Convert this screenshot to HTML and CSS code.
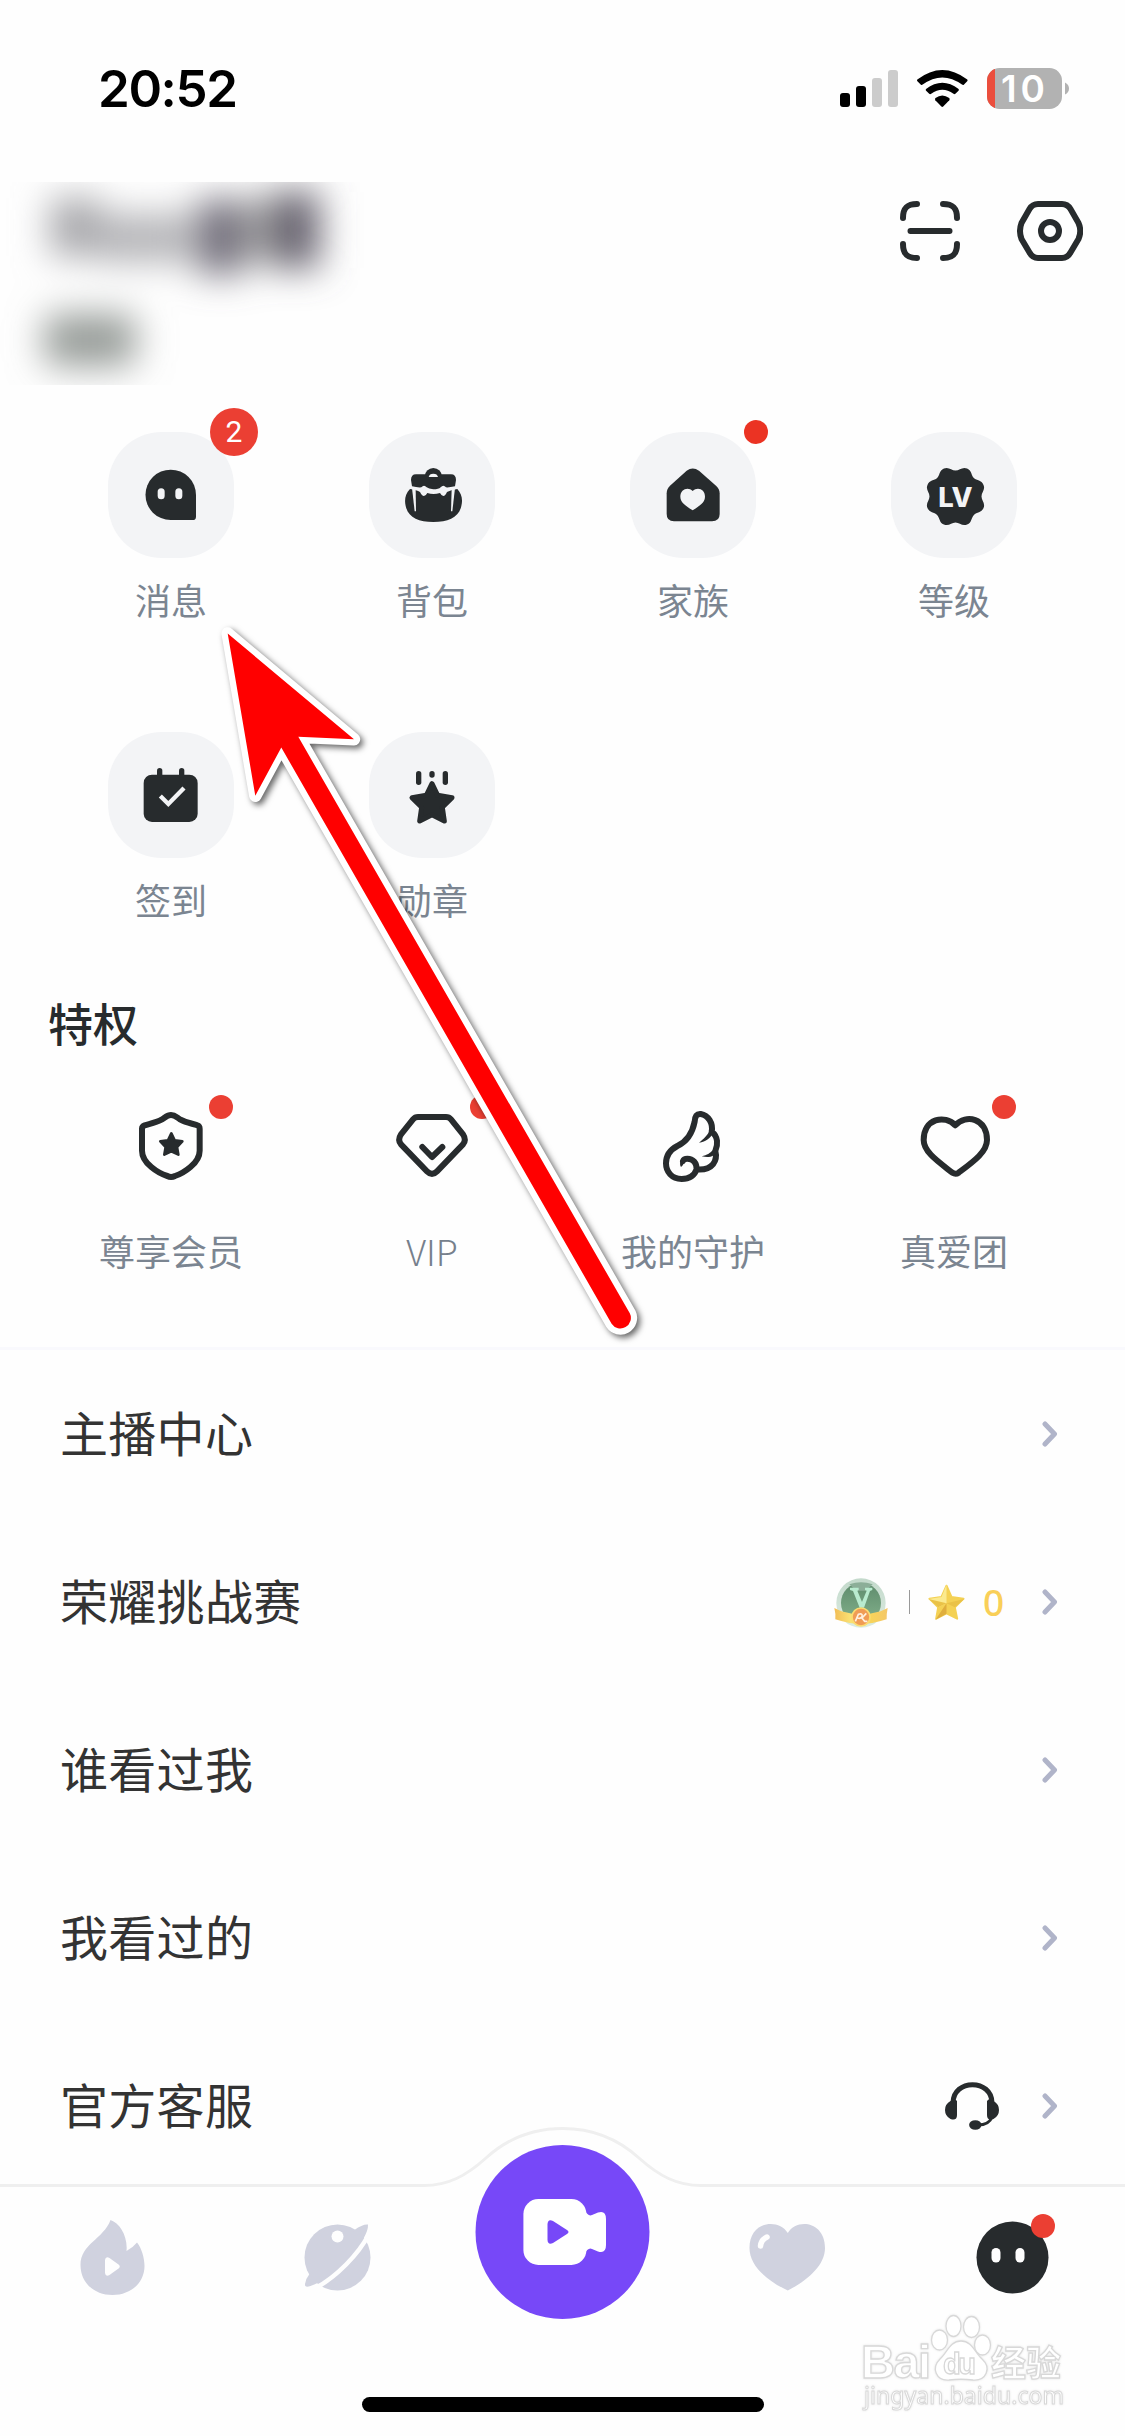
FILE: index.html
```html
<!DOCTYPE html>
<html lang="zh-CN">
<head>
<meta charset="utf-8">
<title>个人中心</title>
<link rel="stylesheet" href="styles.css">
</head>
<body>
<div class="phone">
  <header class="status">
    <div class="clock">20:52</div>
    <svg class="status-icons" viewBox="840 68 230 42" width="230" height="42">
      <rect x="840" y="93" width="10" height="14" rx="3"/>
      <rect x="856" y="86" width="10" height="21" rx="3"/>
      <rect x="872" y="78" width="10" height="29" rx="3" fill="#ccc"/>
      <rect x="888" y="70" width="10" height="37" rx="3" fill="#ccc"/>
      <path d="M917.3 79.6 Q942.3 60.5 967.3 79.6 Q968 80.5 967.2 81.3 L963.8 84.7 Q963 85.3 962 84.6 Q942.3 70.3 922.7 84.6 Q921.7 85.3 920.9 84.7 L917.4 81.3 Q916.600 80.500 917.300 79.600Z"/>
      <path d="M926 89 Q942.300 76.400 958.600 89 Q959.300 89.900 958.500 90.800 L955.400 93.800 Q954.500 94.500 953.500 93.700 Q942.300 85.700 931.200 93.700 Q930.200 94.500 929.200 93.800 L926.100 90.800 Q925.300 89.900 926 89Z"/>
      <path d="M935.500 98 Q942.300 92.800 949.200 98 Q950.200 99.100 949.300 100.200 L943.200 106.500 Q942.300 107.400 941.400 106.500 L935.300 100.200 Q934.500 99.100 935.500 98Z"/>
      <clipPath id="battery"><rect x="987" y="68" width="75" height="41" rx="12.500"/></clipPath>
      <g clip-path="url(#battery)">
        <rect x="987" y="68" width="75" height="41" fill="#b2b2b2"/>
        <rect x="987" y="68" width="8" height="41" fill="#eb4e3d"/>
      </g>
      <path d="M1065 82.500 Q1069 84.500 1069 88.500 Q1069 92.500 1065 94.500Z" fill="#b2b2b2"/>
      <text class="battery-level" x="1001" y="102" textLength="44">10</text>
    </svg>
  </header>

  <section class="profile">
    <svg class="profile-name" viewBox="0 182 380 203" width="380" height="203">
      <defs><filter id="soft" x="-50%" y="-50%" width="200%" height="200%"><feGaussianBlur stdDeviation="18"/></filter></defs>
      <g filter="url(#soft)">
        <rect x="50" y="198" width="50" height="58" fill="#a8a8ac"/>
        <rect x="100" y="214" width="92" height="48" fill="#b4b4b7"/>
        <rect x="196" y="200" width="50" height="74" fill="#75717e"/>
        <rect x="246" y="200" width="22" height="60" fill="#aaa"/>
        <rect x="268" y="192" width="52" height="76" fill="#68636f"/>
        <rect x="44" y="314" width="92" height="52" rx="12" fill="#969b98"/>
      </g>
    </svg>
    <div class="profile-actions">
      <svg viewBox="0 0 60 60" width="60" height="60" class="line">
        <path d="M17 3 C7 3 3 7 3 17 M43 3 C53 3 57 7 57 17 M3 43 C3 53 7 57 17 57 M57 43 C57 53 53 57 43 57 M10.500 30 H49.500"/>
      </svg>
      <svg viewBox="1017 201 66 60" width="66" height="60" class="line">
        <path d="M1038 204 H1062 Q1067.500 204 1070.500 209 L1078.500 223 Q1082 231 1078.500 239 L1070.500 252.500 Q1067.500 258 1062 258 H1038 Q1032.500 258 1029.500 252.500 L1021.500 239 Q1018.500 231 1021.500 223 L1029.500 209 Q1032.500 204 1038 204Z"/>
        <circle cx="1050" cy="231" r="9"/>
      </svg>
    </div>
  </section>

  <nav class="shortcuts">
    <a class="shortcut">
      <span class="tile">
        <svg viewBox="85 96 378 378">
          <path d="M273 209 A76 76 0 0 1 349 285 V350 a10 10 0 0 1 -10 10 H273 A75.500 75.500 0 0 1 273 209Z"/>
          <g class="hole"><rect x="234" y="265" width="21" height="33" rx="10.500"/><rect x="287" y="265" width="21" height="33" rx="10.500"/></g>
        </svg>
        <b class="count">2</b>
      </span>
      <span class="label">消息</span>
    </a>
    <a class="shortcut">
      <span class="tile">
        <svg viewBox="867 96 378 378">
          <path d="M1034 230 a26 26 0 0 1 52 0Z"/>
          <path d="M1008 223 H1113 Q1128 223 1128 240 L1125 259 Q1107 263 1098 262 Q1090 252 1082 262 Q1076 268 1060 268 Q1046 267 1040 262 Q1032 252 1024 262 Q1012 263 996 259 L993 240 Q993 223 1008 223Z"/>
          <path d="M990 267 C975 282 973 300 977 318 C984 352 1015 366 1060 366 C1105 366 1137 352 1144 318 C1149 298 1145 282 1132 267 Q1112 270 1101 276 Q1091 299 1080 279 Q1060 285 1042 279 Q1031 299 1020 276 Q1010 270 990 267Z"/>
          <g class="hole"><path d="M1046 231 Q1048 221 1060 221 Q1072 221 1074 231Z"/><path d="M996 264 L1007 268 L1008 334 H1004Z"/><path d="M1125 264 L1115 268 L1113 334 H1117Z"/></g>
        </svg>
      </span>
      <span class="label">背包</span>
    </a>
    <a class="shortcut">
      <span class="tile">
        <svg viewBox="90 96 378 378">
          <path d="M260 212 Q278 199 297 212 L348 257 Q359 267 359 280 V342 Q359 364 336 364 H222 Q200 364 200 342 V280 Q200 267 210 257Z"/>
          <path class="hole" d="M278 273 C293 259 315 268 315 290 C315 309 295 319 278 331 C261 319 241 309 241 290 C241 268 264 259 278 273Z"/>
        </svg>
        <i class="dot dot-family"></i>
      </span>
      <span class="label">家族</span>
    </a>
    <a class="shortcut">
      <span class="tile">
        <svg viewBox="873 96 378 378">
          <path transform="translate(1066.500 289.500)" d="M78 0 C78 12 90.200 20 84.100 34.800 C78 49.600 63.700 46.700 55.200 55.200 C46.700 63.700 49.600 78 34.800 84.100 C20 90.200 12 78 0 78 C-12 78 -20 90.200 -34.800 84.100 C-49.600 78 -46.700 63.700 -55.200 55.200 C-63.700 46.700 -78 49.600 -84.100 34.800 C-90.200 20 -78 12 -78 0 C-78 -12 -90.200 -20 -84.100 -34.800 C-78 -49.600 -63.700 -46.700 -55.200 -55.200 C-46.700 -63.700 -49.600 -78 -34.800 -84.100 C-20 -90.200 -12 -78 0 -78 C12 -78 20 -90.200 34.800 -84.100 C49.600 -78 46.700 -63.700 55.200 -55.200 C63.700 -46.700 78 -49.600 84.100 -34.800 C90.200 -20 78 -12 78 0Z"/>
          <text class="level" x="1015" y="322" textLength="103" lengthAdjust="spacingAndGlyphs">LV</text>
        </svg>
      </span>
      <span class="label">等级</span>
    </a>
    <a class="shortcut">
      <span class="tile">
        <svg viewBox="85 336 378 378">
          <rect x="192" y="464" width="162" height="142" rx="25"/>
          <rect x="232" y="444" width="16" height="30" rx="8"/><rect x="298" y="444" width="16" height="30" rx="8"/>
          <path d="M242 528 L266 552 L313 504" fill="none" stroke="#f3f4f6" stroke-width="13"/>
        </svg>
      </span>
      <span class="label">签到</span>
    </a>
    <a class="shortcut">
      <span class="tile">
        <svg viewBox="867 336 378 378">
          <rect x="1008" y="453" width="16" height="42" rx="8"/><rect x="1048" y="453" width="16" height="20" rx="8"/><rect x="1088" y="453" width="16" height="42" rx="8"/>
          <path class="soft-star" d="M1056 491 L1073 526 L1116 533 L1087 562 L1093 603 L1056 584 L1019 603 L1025 562 L996 533 L1039 526Z"/>
        </svg>
      </span>
      <span class="label">勋章</span>
    </a>
  </nav>

  <h2 class="heading">特权</h2>
  <nav class="privileges">
    <a class="privilege">
      <svg class="line" viewBox="138 63 270 270">
        <path d="M273 105 C285 105 290 112 300 118 C320 129 340 131 352 136 Q359 138 359 146 V212 C359 250 310 280 285 288 Q273 294 262 288 C235 280 186 250 186 212 V146 Q186 139 194 136 C210 131 228 128 246 118 C256 112 262 105 273 105Z"/>
        <path class="small-star" d="M274 160 L284 181 L307 184 L291 201 L295 224 L274 214 L253 224 L257 201 L241 184 L264 181Z"/>
      </svg>
      <i class="dot"></i>
      <span class="label">尊享会员</span>
    </a>
    <a class="privilege">
      <svg class="line" viewBox="921 63 270 270">
        <path d="M1014 111 H1098 Q1107 111 1113 118 L1149 163 Q1160 180 1149 193 L1071 274 Q1056 289 1041 274 L963 193 Q952 180 963 163 L999 118 Q1005 111 1014 111Z"/>
        <path d="M1027 201 L1056 231 L1087 201"/>
      </svg>
      <i class="dot"></i>
      <span class="label label-latin">VIP</span>
    </a>
    <a class="privilege">
      <svg class="line" viewBox="264 63 270 270">
        <path d="M410 268 C403 288 386 297 365 297 C335 297 318 275 318 250 C318 225 333 208 352 198 C385 183 398 155 404 125 C405 108 410 101 422 102 C445 106 460 130 455 155 C475 170 474 195 466 213 C473 240 460 272 410 268 C410 248 399 236 382 236 C376 236 371 238 369 243"/>
        <path class="solid" d="M450 150 L462 156 C452 174 438 186 417 188 C432 176 441 168 450 150Z M458 211 L472 213 C464 230 448 234 425 229 C442 225 450 220 458 211Z M374 233 C361 239 357 250 363 261 C370 257 370 249 377 244Z"/>
      </svg>
      <span class="label">我的守护</span>
    </a>
    <a class="privilege">
      <svg class="line" viewBox="1047 63 270 270">
        <path d="M1186 136 C1155 103 1091 115 1091 180 C1091 216 1135 245 1177 278 Q1187 284 1196 278 C1240 245 1281 216 1281 180 C1281 115 1218 101 1186 136Z"/>
      </svg>
      <i class="dot"></i>
      <span class="label">真爱团</span>
    </a>
  </nav>

  <ul class="menu">
    <li class="row"><span class="row-title">主播中心</span><svg class="chevron" viewBox="0 0 16 26"><path d="M3 3 L12.500 13 L3 23"/></svg></li>
    <li class="row"><span class="row-title">荣耀挑战赛</span>
      <svg class="medal" viewBox="100 115 162 153" width="54" height="51">
        <defs>
          <linearGradient id="rim" x2="0" y2="1"><stop offset="0" stop-color="#c3d9cb"/><stop offset="1" stop-color="#dcece2"/></linearGradient>
          <linearGradient id="disc" x2="0" y2="1"><stop offset="0" stop-color="#5e8b6c"/><stop offset="1" stop-color="#83b18c"/></linearGradient>
          <linearGradient id="ribbon"><stop offset="0" stop-color="#f2bd56"/><stop offset=".3" stop-color="#fae173"/><stop offset=".7" stop-color="#f8d35a"/><stop offset="1" stop-color="#f4c768"/></linearGradient>
        </defs>
        <circle cx="181" cy="193" r="74" fill="url(#rim)"/>
        <circle cx="181" cy="193" r="60" fill="url(#disc)"/>
        <path d="M146 137 Q181 124 216 137 L196 156 H166Z" fill="#8cae98"/>
        <path d="M148 147 H174 V154 L170 156 L184 190 L198 156 L193 154 V147 H215 V154 L208 157 L190 207 H177 L157 157 L148 154Z" fill="#b9ebcf"/>
        <path d="M101 208 L122 218 Q181 236 240 218 L261 208 Q257 228 258 242 L240 247 Q181 266 122 247 L104 242 Q106 228 101 208Z" fill="url(#ribbon)"/>
        <circle cx="181" cy="235" r="27" fill="#f09c55" stroke="#fbdc70" stroke-width="5"/>
        <path d="M164 248 L173 227 Q187 222 184 234 Q181 241 171 238 M197 224 L184 238 L192 248 H200" fill="none" stroke="#fff0df" stroke-width="5"/>
      </svg>
      <i class="bar"></i>
      <svg class="star" viewBox="380 133 110 108" width="37" height="36">
        <path d="M435 138 L450 172 L486 177 L460 203 L467 237 L435 221 L404 237 L410 203 L384 177 L420 172Z" fill="#f4d154" stroke="#f4d154" stroke-width="6" stroke-linejoin="round"/>
        <path d="M435 135 L420 172 L435 191Z M381 178 L410 203 L435 191 L420 172Z" fill="#fbea8f"/>
        <path d="M402 240 L435 191 V222Z" fill="#dfae3e"/>
        <path d="M381 178 L435 191 L410 203Z M489 178 L435 191 L460 203Z" fill="#eac247"/>
      </svg>
      <span class="stars-count">0</span>
      <svg class="chevron" viewBox="0 0 16 26"><path d="M3 3 L12.500 13 L3 23"/></svg></li>
    <li class="row"><span class="row-title">谁看过我</span><svg class="chevron" viewBox="0 0 16 26"><path d="M3 3 L12.500 13 L3 23"/></svg></li>
    <li class="row"><span class="row-title">我看过的</span><svg class="chevron" viewBox="0 0 16 26"><path d="M3 3 L12.500 13 L3 23"/></svg></li>
    <li class="row"><span class="row-title">官方客服</span>
      <svg class="headset" viewBox="945 2082 54 50" width="54" height="50">
        <path d="M953 2104 C953 2079.500 992 2079.500 992 2104" fill="none" stroke="#272b2d" stroke-width="5"/>
        <path d="M957 2102 Q954 2098 950.500 2102 Q945 2105 945 2111 Q945 2117 950.500 2120 Q957 2122 957 2116Z M987 2102 Q990 2098 993.500 2102 Q999 2105 999 2111 Q999 2117 993.500 2120 Q987 2122 987 2116Z"/>
        <path d="M992 2118 Q989 2126 978 2126" fill="none" stroke="#272b2d" stroke-width="3"/>
        <ellipse cx="975.300" cy="2126" rx="6.200" ry="4.800"/>
      </svg>
      <svg class="chevron" viewBox="0 0 16 26"><path d="M3 3 L12.500 13 L3 23"/></svg></li>
  </ul>

  <footer class="tabs">
    <svg class="tabs-shape" viewBox="0 2126 1125 310" width="1125" height="310">
      <path d="M-5 2185.500 H424 C448 2185.500 466 2176 486 2158 C508 2138 535 2128.500 562.500 2128.500 C590 2128.500 617 2138 639 2158 C659 2176 677 2185.500 701 2185.500 H1130 V2440 H-5Z" fill="#fefefe" stroke="#efefef" stroke-width="3"/>
    </svg>
    <svg class="tab" viewBox="67.500 2212 90 90">
      <path d="M110 2220 C119 2223 127.500 2236 126 2251 Q132 2248 136.500 2242.500 C141 2248 144 2258 144 2266 C144 2283 130 2295 112 2295 C94 2295 80 2283 80 2265 C80 2244 103 2239 110 2220Z"/>
      <path class="cut" d="M104.500 2260 Q105 2256 109 2258 L118 2264.500 Q120.500 2266.500 118 2268.500 L109 2275 Q105 2277 104.500 2273Z"/>
    </svg>
    <svg class="tab" viewBox="292.500 2212 90 90">
      <circle cx="337" cy="2257.500" r="33"/>
      <path d="M354 2230 Q362 2224 367.500 2224.500 C369 2240 333 2279 310 2286 Q304 2288 304.500 2284 Q305 2279 309 2274Z"/>
      <path d="M368 2235 C358 2254 336 2277 315 2288" fill="none" stroke="#fefefe" stroke-width="4.500"/>
      <circle class="cut" cx="337" cy="2236.500" r="6"/>
    </svg>
    <svg class="tab-live" viewBox="475 2145 175 175">
      <circle cx="562.500" cy="2232" r="87" fill="#7748f8"/>
      <rect x="523.400" y="2199" width="63" height="66" rx="15" fill="#fff"/>
      <path d="M584 2209 Q588 2217 592 2215 L598 2212.500 Q606 2210 606 2219 V2245 Q606 2254 598 2251.500 L592 2249 Q588 2247 584 2255Z" fill="#fff"/>
      <path d="M547.500 2224 Q548 2218.500 553 2221 L567 2230 Q570 2232 567 2234 L553 2243 Q548 2245.500 547.500 2240Z" fill="#7748f8"/>
    </svg>
    <svg class="tab" viewBox="742.500 2212 90 90">
      <path d="M787.300 2233 C778 2218 749 2221 749 2248 C749 2266 767 2281 787.300 2290.500 C806 2281 824.500 2266 824.500 2248 C824.500 2221 796 2218 787.300 2233Z"/>
      <path d="M760 2246 Q760.500 2240 766.500 2237" fill="none" stroke="#fefefe" stroke-width="5.500" stroke-linecap="round"/>
    </svg>
    <svg class="tab" viewBox="967.500 2212 90 90">
      <circle cx="1012" cy="2257.500" r="36" fill="#272b2d"/>
      <rect class="cut" x="991" y="2248" width="9" height="14.500" rx="4.500"/><rect class="cut" x="1015" y="2248" width="9" height="14.500" rx="4.500"/>
      <circle cx="1042.500" cy="2226" r="12" fill="#eb3f33"/>
    </svg>
    <div class="home"></div>
    <svg class="watermark" viewBox="855 2310 220 110" width="220" height="110">
      <text x="861" y="2378" font-size="47" textLength="70" class="wm-bold">Bai</text>
      <path d="M961 2341 C972 2341 975 2353 982 2359 C992 2368 986 2381 973 2380 C965 2379 957 2379 949 2380 C936 2381 931 2368 940 2359 C947 2353 950 2341 961 2341Z"/>
      <ellipse cx="939.500" cy="2340" rx="8" ry="10"/><ellipse cx="953.500" cy="2326" rx="7.500" ry="10.500"/><ellipse cx="971.500" cy="2327" rx="8" ry="10.500"/><ellipse cx="982.500" cy="2345" rx="8" ry="10"/>
      <text x="943" y="2374" font-size="29" textLength="33" class="wm-bold">du</text>
      <text x="991" y="2376" font-size="35" textLength="70" class="wm-bold">经验</text>
      <text x="864" y="2404" font-size="23" textLength="200" class="wm-url">jingyan.baidu.com</text>
    </svg>
  </footer>

  <svg class="pointer" viewBox="210 615 450 740" width="450" height="740">
    <path d="M227.700 633.500 L354 739.300 L298.300 736.800 L629.800 1313.300 A10.500 10.500 0 0 1 611.600 1323.700 L281.300 747.500 L255.300 795.700Z" stroke="#fff" stroke-width="12.500" stroke-linejoin="round" fill="#fff"/>
    <path d="M227.700 633.500 L354 739.300 L298.300 736.800 L629.800 1313.300 A10.500 10.500 0 0 1 611.600 1323.700 L281.300 747.500 L255.300 795.700Z" fill="#f00"/>
  </svg>
</div>
</body>
</html>
```
FILE: styles.css
```css
* { box-sizing: border-box; }
body {
  margin: 0;
  background: #fefefe;
  color: #272b2d;
  font-family: "Noto Sans CJK SC", sans-serif;
}
.phone {
  position: relative;
  width: 1125px;
  height: 2436px;
  overflow: hidden;
}
svg { display: block; flex: none; }

.status {
  display: flex;
  justify-content: space-between;
  height: 182px;
  padding: 68px 55px 0 98px;
}
.clock {
  margin-top: -9px;
  font: 600 51px/60px Inter, sans-serif;
  letter-spacing: -1.400px;
  color: #000;
}
.status-icons { fill: #000; overflow: visible; }
.battery-level { font: 600 37px Inter, sans-serif; fill: #fff; }

.profile {
  display: flex;
  justify-content: space-between;
  height: 250px;
  padding-right: 42px;
}
.profile-actions { display: flex; gap: 57px; padding-top: 19px; }
.line {
  fill: none;
  stroke: #272b2d;
  stroke-width: 6;
  stroke-linecap: round;
  stroke-linejoin: round;
}

.shortcuts {
  display: grid;
  grid-template-columns: repeat(4, 261px);
  grid-auto-rows: 300px;
  padding-left: 40.500px;
}
.shortcut, .privilege {
  display: flex;
  flex-direction: column;
  align-items: center;
}
.tile {
  position: relative;
  width: 126px;
  height: 126px;
  border-radius: 54px;
  background: #f3f4f6;
}
.tile svg { width: 126px; height: 126px; fill: #272b2d; }
.tile .hole { fill: #f3f4f6; }
.level { font: 800 80px Inter, sans-serif; fill: #f3f4f6; }
.soft-star { stroke: #272b2d; stroke-width: 15; stroke-linejoin: round; }
.count {
  position: absolute;
  top: -24px;
  left: 102px;
  width: 48px;
  height: 48px;
  border-radius: 50%;
  background: #eb3f33;
  color: #fff;
  font: 400 30px/48px Roboto, sans-serif;
  text-align: center;
}
.dot {
  position: absolute;
  top: 3px;
  right: 67.500px;
  width: 24px;
  height: 24px;
  border-radius: 50%;
  background: #eb3f33;
}
.dot-family { top: -12px; right: -12px; background: #eb3323; }
.label {
  margin-top: 15px;
  font-size: 36px;
  font-weight: 400;
  line-height: 52px;
  color: #7b8591;
}
.label-latin { font-weight: 300; color: #76808c; }

.heading {
  height: 63px;
  margin: -39px 0 3px;
  padding-left: 48px;
  font-size: 45px;
  font-weight: 500;
  line-height: 60px;
}
.privileges {
  display: grid;
  grid-template-columns: repeat(4, 261px);
  height: 288px;
  padding-left: 40.500px;
}
.privilege { position: relative; padding-top: 9px; }
.privilege svg { width: 90px; height: 90px; margin: 33px 0 18px; stroke-width: 18; }
.privilege .dot { top: 36px; right: 68.500px; }
.privilege .small-star { fill: #272b2d; stroke-width: 8; }
.privilege .solid { fill: #272b2d; stroke: none; }

.menu {
  margin: 0;
  padding: 0;
  list-style: none;
  border-top: 3px solid #f9f9fd;
}
.row {
  display: flex;
  align-items: center;
  height: 168px;
  padding: 0 67px 0 60px;
}
.row-title {
  flex: 1;
  padding-bottom: 6px;
  font-size: 48px;
  font-weight: 400;
  line-height: 70px;
  letter-spacing: .3px;
  color: #333;
}
.chevron {
  width: 16px;
  height: 26px;
  fill: none;
  stroke: #b0b4c9;
  stroke-width: 5;
  stroke-linecap: round;
  stroke-linejoin: round;
}
.bar { width: 1px; height: 24px; margin: 0 18px 0 21px; background: #999; }
.stars-count {
  width: 77px;
  padding-left: 18px;
  font: 500 37px/50px "Noto Sans", sans-serif;
  color: #f9cf58;
}
.headset { margin-right: 43px; fill: #272b2d; }

.tabs {
  position: absolute;
  left: 0;
  bottom: 0;
  display: grid;
  grid-template-columns: repeat(5, 225px);
  grid-template-rows: 271px 39px;
  justify-items: center;
  width: 1125px;
  height: 310px;
}
.tabs-shape { position: absolute; left: 0; top: 0; }
.tab { position: relative; width: 90px; height: 90px; margin-top: 86px; fill: #d0d2df; }
.tab .cut { fill: #fefefe; }
.tab-live { position: relative; width: 175px; height: 175px; margin-top: 19px; }
.home {
  position: relative;
  grid-column: 1 / -1;
  width: 402px;
  height: 15px;
  border-radius: 8px;
  background: #000;
}
.watermark {
  position: absolute;
  left: 855px;
  top: 184px;
  fill: #fff;
  stroke: #d8d8d8;
  stroke-width: 1.300;
  filter: drop-shadow(0 0 1px rgba(0, 0, 0, .1));
}
.wm-bold { font-family: "Liberation Sans", "Noto Sans CJK SC", sans-serif; font-weight: 700; }
.wm-url { font-family: "Noto Sans", sans-serif; stroke-width: 1; }

.pointer {
  position: absolute;
  left: 210px;
  top: 615px;
  filter: drop-shadow(3px 3px 3px rgba(0, 0, 0, .6));
}
```
